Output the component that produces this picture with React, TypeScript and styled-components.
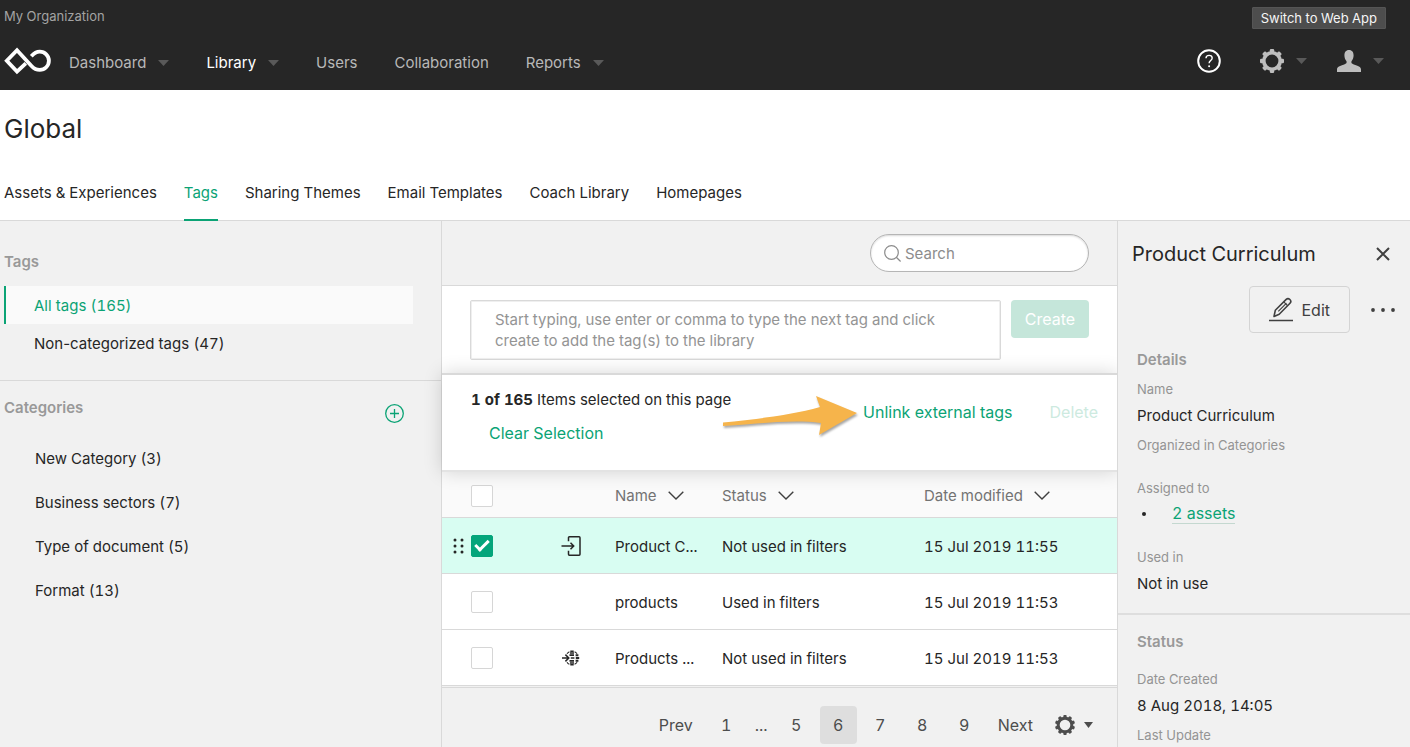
import React from "react";
import styled, { createGlobalStyle, css } from "styled-components";

const green = "#0ba375";
const line = "#d9d9d9";
const panel = "#f1f1f1";

const GlobalStyle = createGlobalStyle`
  *, *::before, *::after { box-sizing: border-box; }
  body {
    margin: 0;
    background: ${panel};
    color: #262626;
    font-family: Inter, "Liberation Sans", sans-serif;
    font-size: 15px;
    line-height: 20px;
    font-variant-numeric: tabular-nums;
  }
  button, input, textarea { font: inherit; }
  button { cursor: pointer; }
  h1, h2, h3, p, ul, dl, dd { margin: 0; padding: 0; }
`;

const Page = styled.div`
  min-height: 100vh;
  display: flex;
  flex-direction: column;
`;

/* ---------- top bar ---------- */

const TopBar = styled.header`
  height: 90px;
  background: #262626;
  display: flex;
  flex-direction: column;
`;

const OrgRow = styled.div`
  display: flex;
  justify-content: space-between;
  padding: 7px 24px 0 4px;
  color: #a3a3a3;
  font-size: 13px;
  line-height: 18px;
`;

const SwitchButton = styled.button`
  height: 22px;
  padding: 0 8px;
  border: 1px solid #555;
  border-radius: 1px;
  background: #4d4d4d;
  color: #f5f5f5;
  font-size: 13px;
  line-height: 18px;
`;

const NavRow = styled.div`
  flex: 1;
  display: flex;
  align-items: center;
  padding: 2px 26px 0 4px;
`;

const LogoLink = styled.a`
  display: flex;
  margin-right: 18px;
`;

const MainNav = styled.nav`
  display: flex;
  gap: 37px;
  padding-top: 4px;
`;

const NavLink = styled.a<{ $active?: boolean }>`
  display: flex;
  align-items: center;
  gap: 12px;
  color: ${(p) => (p.$active ? "#fff" : "#b8b8b8")};
  text-decoration: none;
`;

const Tools = styled.div`
  display: flex;
  align-items: center;
  margin-left: auto;
  gap: 30px;
`;

const ToolButton = styled.button<{ $first?: boolean }>`
  display: flex;
  align-items: center;
  gap: 12px;
  margin-right: ${(p) => (p.$first ? "9px" : "0")};
  padding: 0;
  border: 0;
  background: none;
  color: #bdbdbd;
`;

/* ---------- title and tabs ---------- */

const Heading = styled.section`
  background: #fff;
  border-bottom: 1px solid ${line};
  padding: 21px 4px 0;
`;

const PageTitle = styled.h1`
  font-size: 26px;
  line-height: 36px;
  font-weight: 400;
`;

const Tabs = styled.nav`
  display: flex;
  gap: 27px;
  margin: 25px 0 -1px;
`;

const Tab = styled.a<{ $active?: boolean }>`
  padding: 11px 0 16px;
  border-bottom: 2px solid ${(p) => (p.$active ? green : "transparent")};
  color: ${(p) => (p.$active ? green : "#262626")};
  text-decoration: none;
`;

/* ---------- columns ---------- */

const Columns = styled.main`
  flex: 1;
  display: grid;
  grid-template-columns: 442px minmax(0, 1fr) 293px;
`;

const SectionTitle = styled.h2`
  font-size: 15px;
  line-height: 20px;
  font-weight: 600;
  color: #999;
`;

const Sidebar = styled.aside`
  border-right: 1px solid ${line};
`;

const SideGroup = styled.section`
  padding: 31px 28px 18px 4px;
  border-bottom: 1px solid ${line};
`;

const SideList = styled.ul`
  list-style: none;
  margin-top: 14px;
`;

const SideLink = styled.a<{ $active?: boolean }>`
  display: block;
  padding: 10px 28px 8px;
  border-left: 2px solid ${(p) => (p.$active ? green : "transparent")};
  background: ${(p) => (p.$active ? "#fafafa" : "transparent")};
  color: ${(p) => (p.$active ? green : "#262626")};
  text-decoration: none;
  font-variant-numeric: normal;
`;

const Count = styled.span`
  font-variant-numeric: tabular-nums;
`;

const CategoryGroup = styled.section`
  padding: 17px 37px 0 4px;
`;

const CategoryHead = styled.div`
  display: flex;
  justify-content: space-between;
  align-items: flex-start;
`;

const AddButton = styled.button`
  display: flex;
  margin-top: 6px;
  padding: 0;
  border: 0;
  background: none;
  color: ${green};
`;

const CategoryList = styled.ul`
  list-style: none;
  margin-top: 14px;
`;

const CategoryLink = styled.a`
  display: block;
  padding: 12px 31px;
  color: #262626;
  text-decoration: none;
`;

/* ---------- centre ---------- */

const Centre = styled.section`
  display: flex;
  flex-direction: column;
`;

const SearchBar = styled.div`
  display: flex;
  justify-content: flex-end;
  padding: 13px 28px;
  border-bottom: 1px solid ${line};
`;

const SearchField = styled.label`
  display: flex;
  align-items: center;
  gap: 4px;
  width: 219px;
  height: 38px;
  padding: 0 13px;
  border: 1px solid #b5b5b5;
  border-radius: 19px;
  background: #fff;
  box-shadow: inset 0 1px 2px rgba(0, 0, 0, 0.15);
  color: #8c8c8c;
`;

const SearchInput = styled.input`
  flex: 1;
  min-width: 0;
  padding: 2px 0 0;
  border: 0;
  outline: 0;
  background: none;
  color: #262626;
  &::placeholder { color: #8c8c8c; opacity: 1; }
`;

const CreateBar = styled.div`
  display: flex;
  align-items: flex-start;
  gap: 10px;
  padding: 14px 28px 13px;
  background: #fff;
`;

const TagInput = styled.textarea`
  flex: 1;
  display: block;
  height: 60px;
  padding: 8px 24px;
  border: 1px solid #d9d9d9;
  border-radius: 2px;
  outline: 0;
  resize: none;
  overflow: hidden;
  line-height: 21px;
  box-shadow: inset 0 0 0 1px #efefef;
  &::placeholder { color: #949494; opacity: 1; }
`;

const CreateButton = styled.button`
  width: 78px;
  height: 38px;
  padding: 0;
  border: 0;
  border-radius: 4px;
  background: #c5e6da;
  color: #fff;
  font-size: 16px;
`;

const SelectionBar = styled.div`
  position: relative;
  z-index: 1;
  display: flex;
  justify-content: space-between;
  height: 99px;
  padding: 15px 19px 0 29px;
  border-top: 2px solid ${line};
  border-bottom: 2px solid #e3e3e3;
  background: #fff;
  box-shadow: 0 0 18px rgba(0, 0, 0, 0.16);
`;

const SelectionInfo = styled.div`
  display: flex;
  flex-direction: column;
  align-items: flex-start;
  gap: 13px;
`;

const TextButton = styled.button<{ $indent?: boolean }>`
  padding: 0;
  border: 0;
  background: none;
  color: ${green};
  font-size: 16px;
  line-height: 20px;
  white-space: nowrap;
  margin-left: ${(p) => (p.$indent ? "18px" : "0")};
  &:disabled { color: #cdeadf; }
`;

const SelectionActions = styled.div`
  display: flex;
  gap: 37px;
  height: 20px;
  margin-top: 12px;
`;

const Pointed = styled.div`
  position: relative;
  display: flex;
`;

const PointerArrow = styled.svg`
  position: absolute;
  right: calc(100% + 3px);
  top: -7px;
  filter: drop-shadow(1px 2px 1px rgba(0, 0, 0, 0.35));
`;

const TagTable = styled.table`
  width: 100%;
  table-layout: fixed;
  border-collapse: separate;
  border-spacing: 0;
  background: #fff;
`;

const HeadCell = styled.th`
  height: 46px;
  padding: 2px 0 0;
  border-bottom: 1px solid ${line};
  background: #fafafa;
  color: #737373;
  font-weight: 400;
  text-align: left;
  white-space: nowrap;
`;

const SortButton = styled.button`
  display: flex;
  align-items: center;
  gap: 11px;
  padding: 0;
  border: 0;
  background: none;
  color: inherit;
`;

const Row = styled.tr<{ $selected?: boolean }>`
  background: ${(p) => (p.$selected ? "#d8fdf2" : "#fff")};
`;

const Cell = styled.td<{ $kind?: "handle" | "icon" | "text" }>`
  height: 56px;
  padding: 0;
  border-bottom: 1px solid ${line};
  white-space: nowrap;
  ${(p) => p.$kind === "text" && css`padding-top: 2px;`}
  ${(p) => p.$kind === "handle" && css`padding-left: 4px;`}
  svg { display: block; margin: 0 auto; }
`;

const Tick = styled.input`
  appearance: none;
  display: block;
  position: relative;
  width: 22px;
  height: 22px;
  margin: 0;
  border: 1px solid #d6d6d6;
  border-radius: 2px;
  background: #fff;
  &:checked {
    border-color: #04a57b;
    background: #04a57b;
  }
  &:checked::after {
    content: "";
    position: absolute;
    left: 3px;
    top: 4px;
    width: 14px;
    height: 8px;
    border-left: 3px solid #fff;
    border-bottom: 3px solid #fff;
    transform: rotate(-45deg);
  }
`;

const Pager = styled.nav`
  flex: 1;
  display: flex;
  align-items: flex-start;
  justify-content: flex-end;
  margin-top: 1px;
  padding: 18px 24px 3px;
  border-top: 1px solid ${line};
  color: #4d4d4d;
  font-size: 16px;
`;

const PageButton = styled.button<{ $current?: boolean; $wide?: boolean }>`
  display: flex;
  align-items: center;
  justify-content: center;
  width: ${(p) => (p.$wide ? "auto" : "37px")};
  height: 38px;
  margin-right: 5px;
  padding: ${(p) => (p.$wide ? "0 10px" : "0")};
  border: 0;
  border-radius: 4px;
  background: ${(p) => (p.$current ? "#dedede" : "none")};
  color: inherit;
`;

const PageSizeButton = styled.button`
  display: flex;
  align-items: center;
  gap: 9px;
  height: 38px;
  padding: 0 0 0 7px;
  border: 0;
  background: none;
  color: inherit;
`;

const PageGap = styled.span`
  width: 23px;
  margin-right: 5px;
  line-height: 38px;
  text-align: center;
`;

/* ---------- details ---------- */

const Details = styled.aside`
  position: relative;
  z-index: 2;
  border-left: 1px solid ${line};
  background: ${panel};
`;

const DetailsHead = styled.div`
  display: flex;
  align-items: center;
  justify-content: space-between;
  padding: 19px 20px 0 14px;
`;

const DetailsTitle = styled.h2`
  font-size: 20px;
  line-height: 28px;
  font-weight: 400;
`;

const IconButton = styled.button`
  display: flex;
  padding: 0;
  border: 0;
  background: none;
  color: #404040;
`;

const DetailsActions = styled.div`
  display: flex;
  align-items: center;
  justify-content: flex-end;
  gap: 20px;
  padding: 18px 14px 0;
`;

const EditButton = styled.button`
  display: flex;
  align-items: center;
  gap: 8px;
  height: 47px;
  padding: 0 19px;
  border: 1px solid #d4d4d4;
  border-radius: 4px;
  background: none;
  color: #404040;
  font-size: 16px;
`;

const DetailsSection = styled.section<{ $divided?: boolean }>`
  padding: 17px 19px ${(p) => (p.$divided ? "19px" : "0")};
  border-bottom: ${(p) => (p.$divided ? "2px solid #dedede" : "0")};
`;

const Facts = styled.dl<{ $spaced?: boolean }>`
  margin-top: ${(p) => (p.$spaced ? "18px" : "10px")};
`;

const Term = styled.dt<{ $gap?: number }>`
  margin-top: ${(p) => p.$gap ?? 0}px;
  color: #949494;
  font-size: 13px;
  line-height: 18px;
`;

const Value = styled.dd`
  margin-top: 8px;
`;

const AssetList = styled.ul`
  list-style: none;
  margin-top: 6px;
`;

const AssetItem = styled.li`
  display: flex;
  align-items: center;
  &::before {
    content: "";
    width: 4px;
    height: 4px;
    margin: 0 26px 0 5px;
    border-radius: 50%;
    background: #262626;
  }
`;

const AssetLink = styled.a`
  border-bottom: 1px solid #c4d8d0;
  color: ${green};
  font-size: 16px;
  line-height: 20px;
  text-decoration: none;
`;

/* ---------- icons ---------- */

const Caret = ({ color = "#595959", width = 11 }: { color?: string; width?: number }) => (
  <svg width={width} height="6" viewBox="0 0 12 6" preserveAspectRatio="none" aria-hidden="true">
    <path d="M0 0h12L6 6z" fill={color} />
  </svg>
);

const Logo = () => (
  <svg width="47" height="28" viewBox="0 0 47 28" fill="none" stroke="#fff" strokeWidth="3.800" aria-hidden="true">
    <path d="M21.800 16.400 13 24.600 2.800 13.800 13 3.200 27.500 19C30 21.800 32.500 22.900 35.800 22.900A9.100 9.100 0 1 0 35.800 4.700C32.600 4.700 30.300 5.800 27.300 9.200" />
  </svg>
);

const Gear = ({ size, teeth, ring, tooth }: { size: number; teeth: number; ring: number; tooth: number }) => (
  <svg width={size} height={size} viewBox="-12 -12 24 24" aria-hidden="true">
    <circle r="8.200" fill="none" stroke="currentColor" strokeWidth={ring} />
    {Array.from({ length: teeth }, (_, i) => (
      <rect
        key={i}
        x={-tooth / 2}
        y="-12"
        width={tooth}
        height="4"
        rx="1.200"
        fill="currentColor"
        transform={`rotate(${(360 / teeth) * i})`}
      />
    ))}
  </svg>
);

const HelpIcon = () => (
  <svg width="24" height="24" viewBox="0 0 24 24" fill="none" stroke="#fff" aria-hidden="true">
    <circle cx="12" cy="12" r="10.800" strokeWidth="2" />
    <path d="M9 9.300c0-4 6.200-3.800 6.200-.2 0 2.400-3.100 2.600-3.100 5.200" strokeWidth="1.400" />
    <circle cx="12.100" cy="17.200" r="1" fill="#fff" stroke="none" />
  </svg>
);

const PersonIcon = () => (
  <svg width="24" height="22" viewBox="0 0 24 22" fill="currentColor" aria-hidden="true">
    <path d="M12 0c3.200 0 4.600 2.300 4.600 5.300 0 2.600-.9 4.500-2.100 6-.5 1.700.2 2.400 2.300 3.200C21 16 24 16.600 24 19.500V22H0v-2.500c0-2.900 3-3.500 7.200-5 2.100-.8 2.800-1.500 2.300-3.200-1.200-1.500-2.100-3.400-2.100-6C7.400 2.300 8.800 0 12 0z" />
  </svg>
);

const SearchIcon = () => (
  <svg width="17" height="17" viewBox="0 0 17 17" fill="none" stroke="currentColor" strokeWidth="1.200" aria-hidden="true">
    <circle cx="7.500" cy="7.500" r="6.800" />
    <path d="m12.300 12.300 4.300 4.200" />
  </svg>
);

const PlusCircle = () => (
  <svg width="19" height="19" viewBox="0 0 19 19" fill="none" stroke="currentColor" strokeWidth="1.300" aria-hidden="true">
    <circle cx="9.500" cy="9.500" r="8.800" />
    <path d="M9.500 5v9M5 9.500h9" />
  </svg>
);

const Chevron = () => (
  <svg width="16" height="9" viewBox="0 0 16 9" fill="none" stroke="#404040" strokeWidth="1.400" aria-hidden="true">
    <path d="m.7.700 7.300 7.300L15.300.700" />
  </svg>
);

const DragDots = () => (
  <svg width="11" height="16" viewBox="0 0 11 16" fill="#262626" aria-hidden="true">
    {[2, 8, 14].map((y) => (
      <React.Fragment key={y}>
        <circle cx="2" cy={y} r="1.500" />
        <circle cx="9" cy={y} r="1.500" />
      </React.Fragment>
    ))}
  </svg>
);

const ImportIcon = () => (
  <svg width="20" height="20" viewBox="0 0 20 20" fill="none" stroke="#262626" strokeWidth="1.500" aria-hidden="true">
    <path d="M7.500 5.200V1.700q0-.9.900-.9h9.700q.9 0 .9.900v16.600q0 .9-.9.900H8.400q-.9 0-.9-.9v-3.500" />
    <path d="M.500 10h12M9.500 6.800l3.200 3.200-3.200 3.200" />
  </svg>
);

const GlobeImportIcon = () => (
  <svg width="18" height="16" viewBox="0 0 18 16" fill="none" stroke="#262626" aria-hidden="true">
    <path d="M0 8h6.500M3.400 4.600 6.800 8l-3.400 3.400" strokeWidth="1.500" />
    <path d="M5 3.800Q6 2.300 7.400 1.700M5 12.200q1 1.500 2.400 2.100M12.600 1.700q1.500.7 2.500 2.100M12.600 14.300q1.500-.7 2.500-2.100" strokeWidth="1.100" />
    <path d="M8.300 1.300h3.400M8.300 14.700h3.400M8 3h4M8 13h4" strokeWidth="1.500" />
    <path d="M7.500 5.200h4.500M8.800 8h3.600M7.500 10.800h4.500" strokeWidth="1.700" />
    <path d="M13.600 5.200h2.800M13.800 8h3.400M13.600 10.800h2.800" strokeWidth="1.900" />
  </svg>
);

const PencilIcon = () => (
  <svg width="24" height="25" viewBox="0 0 24 25" fill="none" stroke="currentColor" strokeWidth="1.600" strokeLinejoin="round" aria-hidden="true">
    <path d="m5 19.500 1.300-6.200L17.200 2.400q1.800-1.700 3.700.1t.1 3.700L10.200 17.200z" />
    <path d="m14.800 4.800 4 4M17.500 6.100 9.300 14.300" strokeWidth="1.200" />
    <path d="M.500 23.500h23" strokeLinecap="round" />
  </svg>
);

const CloseIcon = () => (
  <svg width="14" height="14" viewBox="0 0 14 14" stroke="currentColor" strokeWidth="2" aria-hidden="true">
    <path d="m1 1 12 12M13 1 1 13" />
  </svg>
);

const DotsIcon = () => (
  <svg width="26" height="4" viewBox="0 0 26 4" fill="currentColor" aria-hidden="true">
    <circle cx="3" cy="2" r="1.900" />
    <circle cx="13" cy="2" r="1.900" />
    <circle cx="23" cy="2" r="1.900" />
  </svg>
);

/* ---------- data ---------- */

const navItems = [
  { label: "Dashboard", menu: true },
  { label: "Library", menu: true, active: true },
  { label: "Users" },
  { label: "Collaboration" },
  { label: "Reports", menu: true },
];

const tabs = ["Assets & Experiences", "Tags", "Sharing Themes", "Email Templates", "Coach Library", "Homepages"];

const categories = ["New Category (3)", "Business sectors (7)", "Type of document (5)", "Format (13)"];

const rows = [
  { name: "Product C...", status: "Not used in filters", date: "15 Jul 2019 11:55", icon: <ImportIcon />, selected: true },
  { name: "products", status: "Used in filters", date: "15 Jul 2019 11:53", icon: null, selected: false },
  { name: "Products ...", status: "Not used in filters", date: "15 Jul 2019 11:53", icon: <GlobeImportIcon />, selected: false },
];

export default function App() {
  return (
    <Page>
      <GlobalStyle />
      <TopBar>
        <OrgRow>
          <span>My Organization</span>
          <SwitchButton>Switch to Web App</SwitchButton>
        </OrgRow>
        <NavRow>
          <LogoLink href="#" aria-label="Home"><Logo /></LogoLink>
          <MainNav aria-label="Main">
            {navItems.map((n) => (
              <NavLink key={n.label} href="#" $active={n.active}>
                {n.label}
                {n.menu && <Caret />}
              </NavLink>
            ))}
          </MainNav>
          <Tools>
            <ToolButton $first aria-label="Help"><HelpIcon /></ToolButton>
            <ToolButton aria-label="Settings"><Gear size={24} teeth={8} ring={3.6} tooth={4.4} /><Caret /></ToolButton>
            <ToolButton aria-label="Account"><PersonIcon /><Caret /></ToolButton>
          </Tools>
        </NavRow>
      </TopBar>

      <Heading>
        <PageTitle>Global</PageTitle>
        <Tabs aria-label="Library sections">
          {tabs.map((t) => (
            <Tab key={t} href="#" $active={t === "Tags"}>{t}</Tab>
          ))}
        </Tabs>
      </Heading>

      <Columns>
        <Sidebar>
          <SideGroup>
            <SectionTitle>Tags</SectionTitle>
            <SideList>
              <li><SideLink href="#" $active>All tags <Count>(165)</Count></SideLink></li>
              <li><SideLink href="#">Non-categorized tags <Count>(47)</Count></SideLink></li>
            </SideList>
          </SideGroup>
          <CategoryGroup>
            <CategoryHead>
              <SectionTitle>Categories</SectionTitle>
              <AddButton aria-label="Add category"><PlusCircle /></AddButton>
            </CategoryHead>
            <CategoryList>
              {categories.map((c) => (
                <li key={c}><CategoryLink href="#">{c}</CategoryLink></li>
              ))}
            </CategoryList>
          </CategoryGroup>
        </Sidebar>

        <Centre>
          <SearchBar>
            <SearchField>
              <SearchIcon />
              <SearchInput type="text" placeholder="Search" aria-label="Search" />
            </SearchField>
          </SearchBar>
          <CreateBar>
            <TagInput
              aria-label="New tags"
              placeholder="Start typing, use enter or comma to type the next tag and click create to add the tag(s) to the library"
            />
            <CreateButton>Create</CreateButton>
          </CreateBar>
          <SelectionBar>
            <SelectionInfo>
              <p><strong>1 of 165</strong> Items selected on this page</p>
              <TextButton $indent>Clear Selection</TextButton>
            </SelectionInfo>
            <SelectionActions>
              <Pointed>
                <PointerArrow width="138" height="44" viewBox="0 0 138 44" aria-hidden="true">
                  <path d="M1 27.500C35 24 70 20 98 12L94 1l41 17-38 22 2-12C70 24 35 29 1 31z" fill="#f6b44b" />
                </PointerArrow>
                <TextButton>Unlink external tags</TextButton>
              </Pointed>
              <TextButton disabled>Delete</TextButton>
            </SelectionActions>
          </SelectionBar>
          <TagTable>
            <colgroup>
              <col style={{ width: 29 }} />
              <col style={{ width: 72 }} />
              <col style={{ width: 56 }} />
              <col style={{ width: 16 }} />
              <col style={{ width: 107 }} />
              <col style={{ width: 202 }} />
              <col />
            </colgroup>
            <thead>
              <tr>
                <HeadCell />
                <HeadCell><Tick type="checkbox" aria-label="Select all" /></HeadCell>
                <HeadCell />
                <HeadCell />
                {["Name", "Status", "Date modified"].map((h) => (
                  <HeadCell key={h} scope="col"><SortButton>{h}<Chevron /></SortButton></HeadCell>
                ))}
              </tr>
            </thead>
            <tbody>
              {rows.map((r, i) => (
                <Row key={i} $selected={r.selected}>
                  <Cell $kind="handle">{r.selected && <DragDots />}</Cell>
                  <Cell><Tick type="checkbox" defaultChecked={r.selected} aria-label={r.name} /></Cell>
                  <Cell $kind="icon">{r.icon}</Cell>
                  <Cell />
                  <Cell $kind="text">{r.name}</Cell>
                  <Cell $kind="text">{r.status}</Cell>
                  <Cell $kind="text">{r.date}</Cell>
                </Row>
              ))}
            </tbody>
          </TagTable>
          <Pager aria-label="Pages">
            <PageButton $wide>Prev</PageButton>
            <PageButton>1</PageButton>
            <PageGap>...</PageGap>
            {["5", "6", "7", "8", "9"].map((n) => (
              <PageButton key={n} $current={n === "6"}>{n}</PageButton>
            ))}
            <PageButton $wide>Next</PageButton>
            <PageSizeButton aria-label="Page size">
              <Gear size={20} teeth={10} ring={3.6} tooth={4} />
              <Caret color="#4d4d4d" width={9} />
            </PageSizeButton>
          </Pager>
        </Centre>

        <Details>
          <DetailsHead>
            <DetailsTitle>Product Curriculum</DetailsTitle>
            <IconButton aria-label="Close"><CloseIcon /></IconButton>
          </DetailsHead>
          <DetailsActions>
            <EditButton><PencilIcon />Edit</EditButton>
            <IconButton aria-label="More actions"><DotsIcon /></IconButton>
          </DetailsActions>
          <DetailsSection $divided>
            <SectionTitle as="h3">Details</SectionTitle>
            <Facts>
              <Term>Name</Term>
              <Value>Product Curriculum</Value>
              <Term $gap={10}>Organized in Categories</Term>
              <Term $gap={25}>Assigned to</Term>
              <dd>
                <AssetList>
                  <AssetItem><AssetLink href="#">2 assets</AssetLink></AssetItem>
                </AssetList>
              </dd>
              <Term $gap={24}>Used in</Term>
              <Value>Not in use</Value>
            </Facts>
          </DetailsSection>
          <DetailsSection>
            <SectionTitle as="h3">Status</SectionTitle>
            <Facts $spaced>
              <Term>Date Created</Term>
              <Value>8 Aug 2018, 14:05</Value>
              <Term $gap={10}>Last Update</Term>
            </Facts>
          </DetailsSection>
        </Details>
      </Columns>
    </Page>
  );
}
